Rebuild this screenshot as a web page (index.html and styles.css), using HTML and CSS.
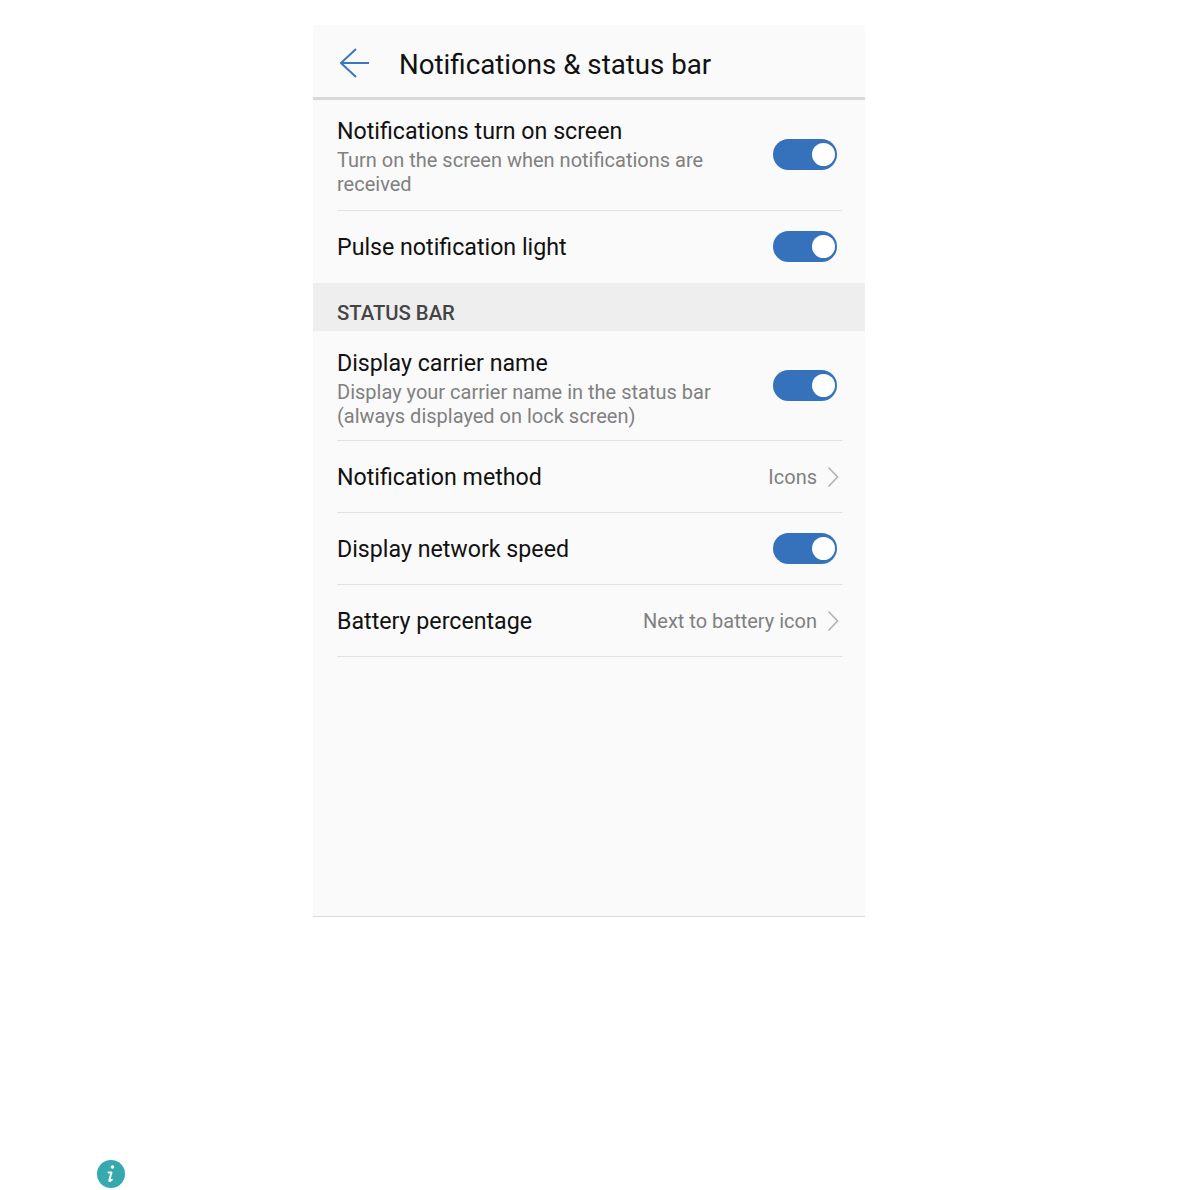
FILE: index.html
```html
<!DOCTYPE html>
<html lang="en">
<head>
<meta charset="utf-8">
<title>Notifications &amp; status bar</title>
<link rel="stylesheet" href="styles.css">
</head>
<body>
<main class="phone">
  <header class="appbar">
    <svg class="back" width="32" height="32" viewBox="0 0 32 32"><path d="M30 16H3M17 2 2 16l15 14" fill="none" stroke="#3a78bd" stroke-width="2"/></svg>
    <h1 class="title">Notifications &amp; status bar</h1>
  </header>
  <section class="list">
    <div class="row row-tall row-first">
      <div class="text"><div class="name">Notifications turn on screen</div><div class="sub">Turn on the screen when notifications are<br>received</div></div>
      <span class="toggle"></span>
    </div>
    <div class="row row-plain row-noline">
      <div class="text"><div class="name">Pulse notification light</div></div>
      <span class="toggle"></span>
    </div>
  </section>
  <div class="section-head">STATUS BAR</div>
  <section class="list">
    <div class="row row-tall row-carrier">
      <div class="text"><div class="name">Display carrier name</div><div class="sub">Display your carrier name in the status bar<br>(always displayed on lock screen)</div></div>
      <span class="toggle"></span>
    </div>
    <div class="row row-plain">
      <div class="text"><div class="name">Notification method</div></div>
      <span class="value">Icons</span>
      <svg class="chev" width="12" height="20" viewBox="0 0 12 20"><path d="M1.5 .5 10.500 10 1.500 19.500" fill="none" stroke="#b5b5b5" stroke-width="1.700"/></svg>
    </div>
    <div class="row row-plain">
      <div class="text"><div class="name">Display network speed</div></div>
      <span class="toggle"></span>
    </div>
    <div class="row row-plain">
      <div class="text"><div class="name">Battery percentage</div></div>
      <span class="value">Next to battery icon</span>
      <svg class="chev" width="12" height="20" viewBox="0 0 12 20"><path d="M1.5 .5 10.500 10 1.500 19.500" fill="none" stroke="#b5b5b5" stroke-width="1.700"/></svg>
    </div>
  </section>
</main>
<footer class="note">
  <span class="info"><svg width="28" height="28" viewBox="0 0 28 28"><circle cx="14" cy="14" r="14" fill="#35a9ad"/><circle cx="15.500" cy="7" r="1.800" fill="#fff"/><path d="M11.500 12.500h3l-2.200 7.800c-.2.900.6 1 2.500-.6" fill="none" stroke="#fff" stroke-width="2" stroke-linecap="round" stroke-linejoin="round"/></svg></span>
</footer>
</body>
</html>
```
FILE: styles.css
```css
* { box-sizing: border-box; }
html, body { margin: 0; padding: 0; background: #fff; }
body {
  height: 1190px;
  overflow: hidden;
  font-family: Roboto, "Liberation Sans", sans-serif;
  padding-top: 25px;
}
.phone {
  width: 552px;
  height: 892px;
  margin-left: 313px;
  background: #fafafa;
  border-bottom: 1px solid #dcdcdc;
}
.appbar {
  height: 75px;
  display: flex;
  align-items: center;
  padding-left: 26px;
  border-bottom: 3px solid #d9d9d9;
}
.back { width: 32px; height: 32px; margin-top: 3px; }
.title {
  margin: 6px 0 0 28px;
  font-size: 27.700px;
  font-weight: 400;
  color: #111;
}
.list { padding: 0 23px 0 24px; }
.row {
  display: flex;
  align-items: center;
  border-bottom: 1px solid #e2e2e2;
}
.row-tall { height: 109px; }
.row-tall .text { padding-top: 2px; }
.row-first { height: 111px; }
.row-first .toggle, .row-noline .toggle { margin-bottom: 2px; }
.row-carrier { height: 110px; }
.row-carrier .text { padding-top: 5px; }
.row-plain { height: 72px; }
.row-noline { border-bottom: 0; }
.text { flex: 1; min-width: 0; }
.name { font-size: 23.200px; line-height: 30px; color: #111; }
.sub { font-size: 20px; line-height: 24px; color: #808080; margin-top: 2px; }
.toggle {
  position: relative;
  width: 64px;
  height: 31px;
  margin-right: 5px;
  border-radius: 16px;
  background: #3672bb;
}
.toggle::after {
  content: "";
  position: absolute;
  right: 2px;
  top: 4px;
  width: 23px;
  height: 23px;
  border-radius: 50%;
  background: #fff;
}
.value { font-size: 20px; color: #808080; margin-right: 10px; }
.chev { margin-right: 3px; }
.section-head {
  height: 48px;
  padding: 17px 0 0 24px;
  background: #eeeeee;
  font-size: 20.300px;
  line-height: 26px;
  font-weight: 500;
  color: #444;
}
.note { padding: 243px 0 0 97px; }
.info { display: block; width: 28px; height: 28px; }
.info svg { display: block; }
```
